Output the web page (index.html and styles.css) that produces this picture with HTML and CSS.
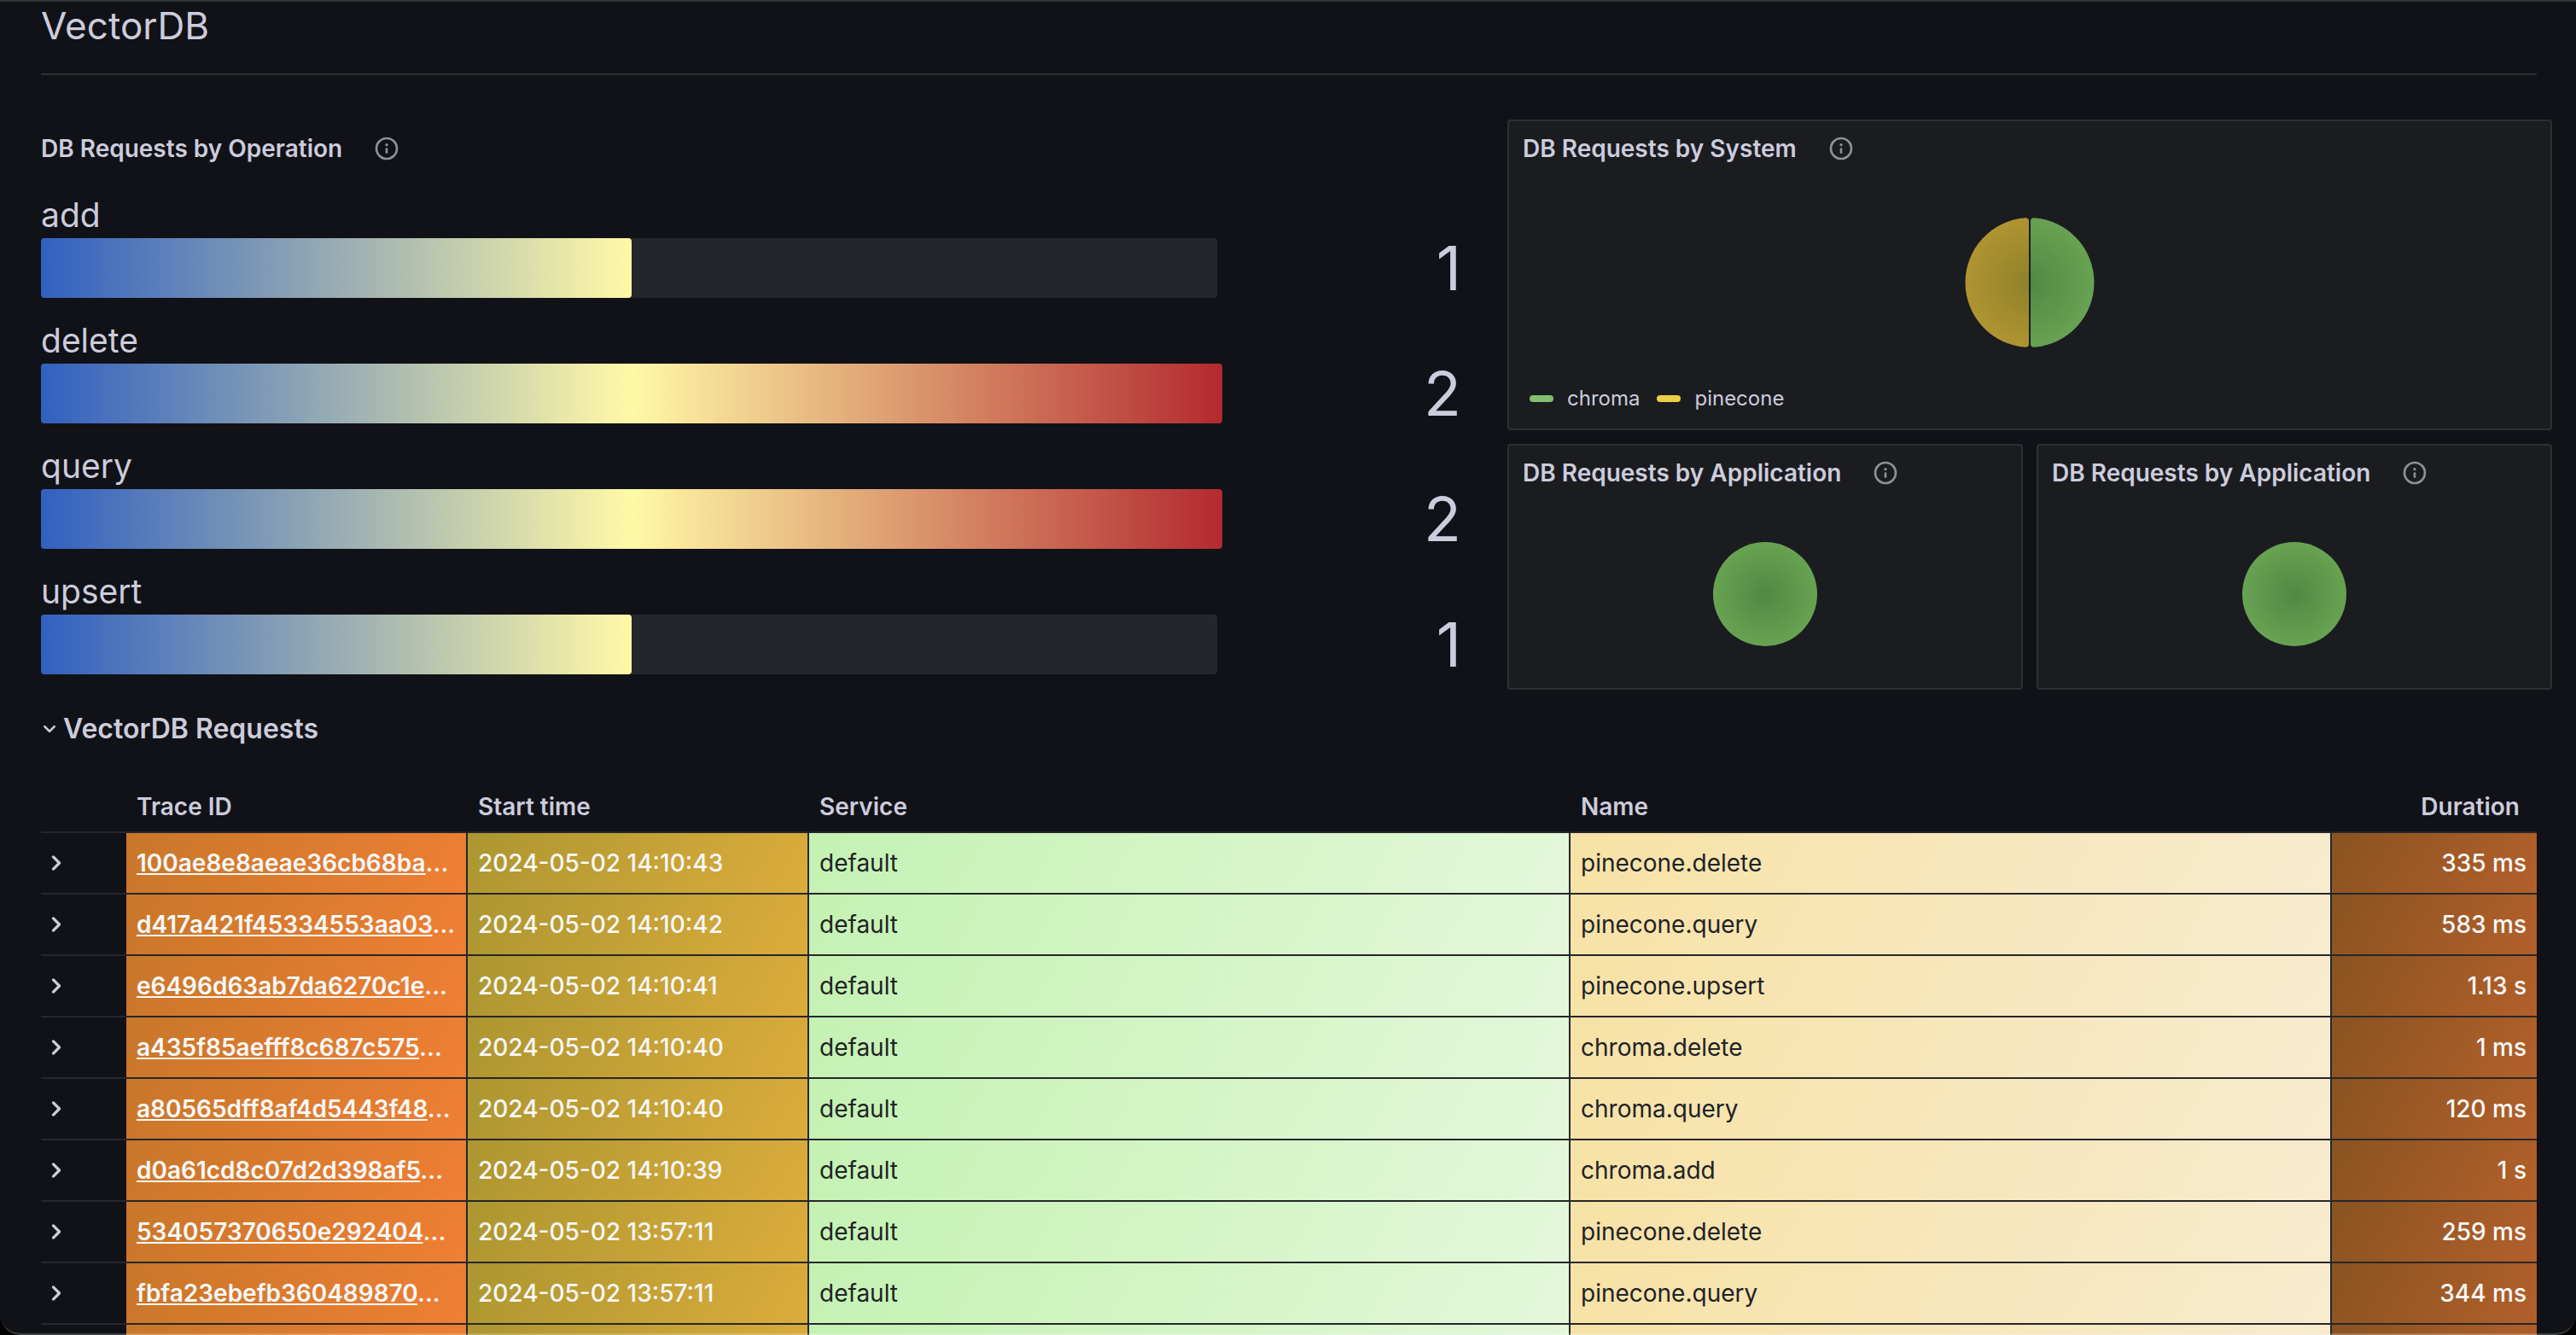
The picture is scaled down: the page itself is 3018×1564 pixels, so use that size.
FILE: index.html
```html
<!DOCTYPE html>
<html lang="en">
<head>
<meta charset="utf-8">
<title>VectorDB</title>
<link rel="stylesheet" href="styles.css">
</head>
<body>
<svg class="sprite" aria-hidden="true">
  <symbol id="info" viewBox="0 0 24 24"><path fill="currentColor" d="M12,2A10,10,0,1,0,22,12,10.01114,10.01114,0,0,0,12,2Zm0,18a8,8,0,1,1,8-8A8.00917,8.00917,0,0,1,12,20Zm0-8.5a1,1,0,0,0-1,1v3a1,1,0,0,0,2,0v-3A1,1,0,0,0,12,11.5Zm0-4a1.25,1.25,0,1,0,1.25,1.25A1.25,1.25,0,0,0,12,7.5Z"/></symbol>
  <symbol id="right" viewBox="0 0 24 24"><path fill="currentColor" d="M14.83,11.29,10.59,7.05a1,1,0,0,0-1.42,0,1,1,0,0,0,0,1.41L12.71,12,9.17,15.54a1,1,0,0,0,0,1.41,1,1,0,0,0,.71.29,1,1,0,0,0,.71-.29l4.24-4.24A1,1,0,0,0,14.83,11.29Z"/></symbol>
  <symbol id="down" viewBox="0 0 24 24"><path fill="currentColor" d="M17,9.17a1,1,0,0,0-1.41,0L12,12.71,8.46,9.17a1,1,0,0,0-1.41,0,1,1,0,0,0,0,1.42l4.24,4.24a1,1,0,0,0,1.42,0L17,10.59A1,1,0,0,0,17,9.17Z"/></symbol>
  <radialGradient id="green" gradientUnits="userSpaceOnUse" cx="0" cy="0" r="76"><stop offset="0" stop-color="#518843"/><stop offset="1" stop-color="#67a352"/></radialGradient>
  <radialGradient id="yellow" gradientUnits="userSpaceOnUse" cx="0" cy="0" r="76"><stop offset="0" stop-color="#8e812a"/><stop offset="1" stop-color="#b09431"/></radialGradient>
</svg>
<main class="app">
  <h1 class="title">VectorDB</h1>
  <div class="overview">
    <section class="operations">
      <h2 class="panel-title">DB Requests by Operation <svg class="info"><use href="#info"/></svg></h2>
      <div class="gauges">
        <div class="gauge"><span class="label">add</span><div class="track"><div class="fill half"></div></div><span class="value">1</span></div>
        <div class="gauge"><span class="label">delete</span><div class="track"><div class="fill"></div></div><span class="value">2</span></div>
        <div class="gauge"><span class="label">query</span><div class="track"><div class="fill"></div></div><span class="value">2</span></div>
        <div class="gauge"><span class="label">upsert</span><div class="track"><div class="fill half"></div></div><span class="value">1</span></div>
      </div>
    </section>
    <div class="pies">
      <section class="panel wide">
        <h2 class="panel-title">DB Requests by System <svg class="info"><use href="#info"/></svg></h2>
        <svg class="pie large" viewBox="-76 -76 152 152">
          <path fill="url(#green)" d="M1 -72Q1 -75.8 5 -75.8A76 76 0 0 1 5 75.8Q1 75.8 1 72Z"/>
          <path fill="url(#yellow)" d="M-1 -72Q-1 -75.8 -5 -75.8A76 76 0 0 0 -5 75.8Q-1 75.8 -1 72Z"/>
        </svg>
        <ul class="legend"><li class="chroma">chroma</li><li class="pinecone">pinecone</li></ul>
      </section>
      <section class="panel">
        <h2 class="panel-title">DB Requests by Application <svg class="info"><use href="#info"/></svg></h2>
        <svg class="pie" viewBox="-76 -76 152 152"><circle r="76" fill="url(#green)"/></svg>
      </section>
      <section class="panel">
        <h2 class="panel-title">DB Requests by Application <svg class="info"><use href="#info"/></svg></h2>
        <svg class="pie" viewBox="-76 -76 152 152"><circle r="76" fill="url(#green)"/></svg>
      </section>
    </div>
  </div>
  <h2 class="row-title"><button class="row-toggle"><svg class="caret"><use href="#down"/></svg>VectorDB Requests</button></h2>
  <table class="requests">
    <colgroup><col class="c-expand"><col class="c-trace"><col class="c-start"><col><col><col class="c-duration"></colgroup>
    <thead><tr><td></td><th>Trace ID</th><th>Start time</th><th>Service</th><th>Name</th><th class="num">Duration</th></tr></thead>
    <tbody>
      <tr><td><button class="expand" aria-label="Expand row"><svg class="chevron"><use href="#right"/></svg></button></td><td class="trace"><a href="#">100ae8e8aeae36cb68ba</a>...</td><td class="start">2024-05-02 14:10:43</td><td class="service">default</td><td class="name">pinecone.delete</td><td class="duration">335 ms</td></tr>
      <tr><td><button class="expand" aria-label="Expand row"><svg class="chevron"><use href="#right"/></svg></button></td><td class="trace"><a href="#">d417a421f45334553aa03</a>...</td><td class="start">2024-05-02 14:10:42</td><td class="service">default</td><td class="name">pinecone.query</td><td class="duration">583 ms</td></tr>
      <tr><td><button class="expand" aria-label="Expand row"><svg class="chevron"><use href="#right"/></svg></button></td><td class="trace"><a href="#">e6496d63ab7da6270c1e</a>...</td><td class="start">2024-05-02 14:10:41</td><td class="service">default</td><td class="name">pinecone.upsert</td><td class="duration">1.13 s</td></tr>
      <tr><td><button class="expand" aria-label="Expand row"><svg class="chevron"><use href="#right"/></svg></button></td><td class="trace"><a href="#">a435f85aefff8c687c575</a>...</td><td class="start">2024-05-02 14:10:40</td><td class="service">default</td><td class="name">chroma.delete</td><td class="duration">1 ms</td></tr>
      <tr><td><button class="expand" aria-label="Expand row"><svg class="chevron"><use href="#right"/></svg></button></td><td class="trace"><a href="#">a80565dff8af4d5443f48</a>...</td><td class="start">2024-05-02 14:10:40</td><td class="service">default</td><td class="name">chroma.query</td><td class="duration">120 ms</td></tr>
      <tr><td><button class="expand" aria-label="Expand row"><svg class="chevron"><use href="#right"/></svg></button></td><td class="trace"><a href="#">d0a61cd8c07d2d398af5</a>...</td><td class="start">2024-05-02 14:10:39</td><td class="service">default</td><td class="name">chroma.add</td><td class="duration">1 s</td></tr>
      <tr><td><button class="expand" aria-label="Expand row"><svg class="chevron"><use href="#right"/></svg></button></td><td class="trace"><a href="#">534057370650e292404</a>...</td><td class="start">2024-05-02 13:57:11</td><td class="service">default</td><td class="name">pinecone.delete</td><td class="duration">259 ms</td></tr>
      <tr><td><button class="expand" aria-label="Expand row"><svg class="chevron"><use href="#right"/></svg></button></td><td class="trace"><a href="#">fbfa23ebefb360489870</a>...</td><td class="start">2024-05-02 13:57:11</td><td class="service">default</td><td class="name">pinecone.query</td><td class="duration">344 ms</td></tr>
      <tr><td></td><td class="trace"></td><td class="start"></td><td class="service"></td><td class="name"></td><td class="duration"></td></tr>
    </tbody>
  </table>
</main>
</body>
</html>
```
FILE: styles.css
```css
* { box-sizing: border-box; }
html { background: #000; }
body {
  margin: 0;
  height: 100vh;
  overflow: hidden;
  font: 400 28px/44px Inter, sans-serif;
  color: #ccccdc;
}
h1, h2, ul { margin: 0; padding: 0; font-weight: 600; }
button { border: 0; padding: 0; background: none; color: inherit; font: inherit; cursor: pointer; }
.sprite { position: absolute; width: 0; height: 0; }

.app {
  position: relative;
  height: 100vh;
  overflow: hidden;
  padding: 0 28px 0 48px;
  background: #111217;
  border-radius: 0 0 24px 24px;
}
/* window frame, drawn over the scrolled content */
.app::after {
  content: "";
  position: absolute;
  inset: 0;
  border: solid rgba(255, 255, 255, 0.2);
  border-width: 2px 0;
  border-top-color: rgba(255, 255, 255, 0.14);
  border-radius: 0 0 24px 24px;
  pointer-events: none;
}
.title {
  height: 88px;
  margin-right: 18px;
  border-bottom: 2px solid #2e2f33;
  font-size: 44px;
  font-weight: 400;
  line-height: 60px;
}

.overview {
  display: grid;
  grid-template-columns: minmax(0, 1718fr) minmax(0, 1224fr);
  padding-top: 52px;
}
.panel-title {
  display: flex;
  align-items: center;
  gap: 36px;
  height: 64px;
  font-size: 28px;
}
.info { width: 32px; height: 32px; color: #8f9097; }
.operations { padding-top: 2px; }
.gauges { display: grid; gap: 8px; padding-top: 15px; }
.gauge {
  display: grid;
  grid-template-columns: minmax(0, 1384fr) minmax(0, 280fr) 54fr;
  grid-template-rows: 58px 70px;
  padding-bottom: 11px;
}
.label { grid-column: 1 / -1; align-self: end; font-size: 39px; line-height: 54px; }
.track {
  width: calc(100% - 6px);
  background: #25262b;
  border-radius: 4px;
}
.fill {
  width: calc(100% + 6px);
  height: 100%;
  border-radius: 4px;
  background: linear-gradient(90deg, #3160c0, #fff9a6 50%, #b32a2f);
}
.fill.half { width: calc(50% + 3px); background: linear-gradient(90deg, #3160c0, #fff9a6); }
.value { font-size: 72px; line-height: 70px; text-align: right; }

.pies {
  display: grid;
  grid-template-columns: 1fr 1fr;
  grid-template-rows: 364px 288px;
  gap: 16px;
}
.panel {
  display: flex;
  flex-direction: column;
  padding: 0 16px;
  background: #1b1c20;
  border: 2px solid #2e2f33;
  border-radius: 4px;
}
.panel.wide { grid-column: 1 / -1; }
.pie { display: block; width: 122px; height: 122px; margin: 49px auto 0; }
.pie.large { width: 152px; height: 152px; }
.legend {
  display: flex;
  gap: 20px;
  margin: auto 0 13px 8px;
  font-size: 24px;
  font-weight: 400;
  list-style: none;
}
.legend li { display: flex; align-items: center; gap: 16px; }
.legend li::before { content: ""; width: 28px; height: 8px; border-radius: 4px; background: #84bf6f; }
.legend .pinecone::before { background: #eccf46; }

.row-title { padding: 24px 0 0; font-size: 32px; }
.row-toggle { display: flex; align-items: center; margin-left: -6px; }
.caret { width: 32px; height: 32px; }

.requests {
  width: calc(100% - 18px);
  margin-top: 40px;
  table-layout: fixed;
  border-collapse: separate;
  border-spacing: 0;
}
.c-expand { width: 100px; }
.c-trace, .c-start { width: 400px; }
.c-duration { width: 240px; }
.requests th, .requests td {
  height: 72px;
  padding: 0 12px;
  border-bottom: 2px solid #26272c;
  border-right: 2px solid #26272c;
  text-align: left;
  white-space: nowrap;
}
.requests th { height: 60px; font-weight: 600; border-right-color: transparent; }
.requests thead td { height: 60px; }
.requests td:first-child { border-right: 0; padding: 0; }
.requests td:last-child, .requests th:last-child { border-right: 0; text-align: right; }
.requests th.num { padding-right: 20px; }
.requests td { background-clip: padding-box; }
.expand { display: block; margin-left: -2px; }
.chevron { display: block; width: 40px; height: 40px; }
.trace { background: linear-gradient(120deg, #c87729, #ef7f34); color: #f7f8fa; font-weight: 600; }
.trace a { color: inherit; text-decoration: underline; text-decoration-thickness: 2px; text-underline-offset: 2px; text-decoration-skip-ink: none; }
.start { background: linear-gradient(120deg, #ac9630, #dcac3c); color: #f7f8fa; font-weight: 500; }
.service { background: linear-gradient(120deg, #c4f2b2, #e3f8da); color: #202226; }
.name { background: linear-gradient(120deg, #f7e2a5, #f8ebcf); color: #202226; }
.duration { background: linear-gradient(120deg, #895321, #b3602a); color: #f7f8fa; font-weight: 500; }
```
